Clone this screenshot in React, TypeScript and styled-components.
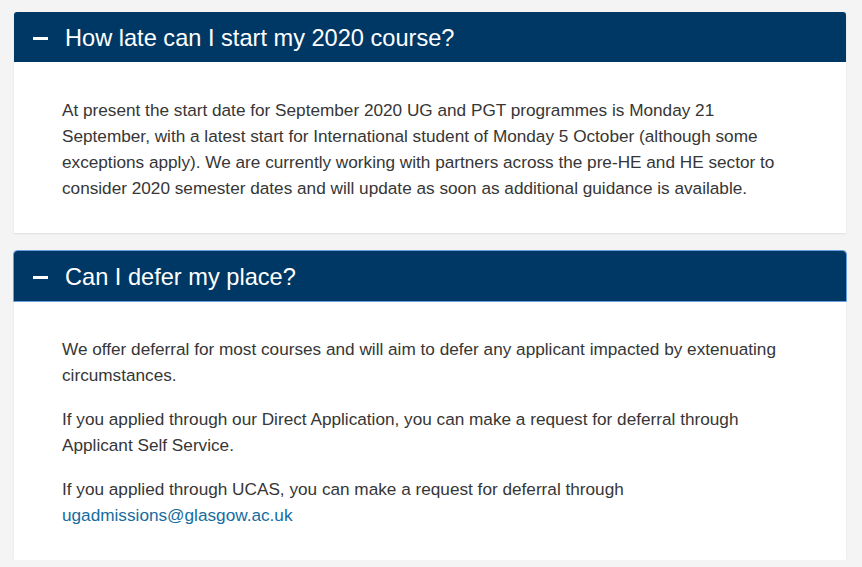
import { useState } from "react";
import styled, { createGlobalStyle } from "styled-components";

const GlobalStyle = createGlobalStyle`
	html, body {
		margin: 0;
		padding: 0;
		background: #f4f4f4;
	}
	body {
		font-family: "Liberation Sans", Arial, sans-serif;
	}
	* {
		box-sizing: border-box;
	}
`;

const Page = styled.div`
	padding: 12px 16px 0 14px;
	display: flex;
	flex-direction: column;
	gap: 18px;
`;

const Panel = styled.section`
	display: flex;
	flex-direction: column;
	background: #ffffff;
	border-radius: 3px 3px 0 0;
	box-shadow: 0 1px 2px rgba(0, 0, 0, 0.09);
`;

const Header = styled.button<{ focused?: boolean }>`
	display: flex;
	align-items: center;
	gap: 17px;
	height: 50px;
	padding: 2px 0 0 19px;
	border: none;
	border-radius: 3px 3px 0 0;
	background: #003865;
	color: #ffffff;
	font: 400 23.6px "Liberation Sans", Arial, sans-serif;
	text-align: left;
	cursor: pointer;
	outline: ${({ focused }) => (focused ? "1px solid #6a9fe0" : "none")};
`;

const Minus = styled.span`
	display: block;
	width: 15px;
	height: 3px;
	background: #ffffff;
	flex-shrink: 0;
`;

const Body = styled.div`
	padding: 35px 60px 32px 48px;
	display: flex;
	flex-direction: column;
	gap: 18px;
`;

const Text = styled.p`
	margin: 0;
	font-size: 17.2px;
	line-height: 26px;
	color: #363636;
`;

const Link = styled.a`
	color: #156c9e;
	text-decoration: none;
`;

interface Item {
	question: string;
	answer: React.ReactNode[];
}

const items: Item[] = [
	{
		question: "How late can I start my 2020 course?",
		answer: [
			"At present the start date for September 2020 UG and PGT programmes is Monday 21 September, with a latest start for International student of Monday 5 October (although some exceptions apply). We are currently working with partners across the pre-HE and HE sector to consider 2020 semester dates and will update as soon as additional guidance is available."
		]
	},
	{
		question: "Can I defer my place?",
		answer: [
			"We offer deferral for most courses and will aim to defer any applicant impacted by extenuating circumstances.",
			"If you applied through our Direct Application, you can make a request for deferral through Applicant Self Service.",
			<>
				If you applied through UCAS, you can make a request for deferral through{" "}
				<Link href="#">ugadmissions@glasgow.ac.uk</Link>
			</>
		]
	}
];

const App = () => {
	const [ open, setOpen ] = useState([ true, true ]);

	return (
		<>
			<GlobalStyle />
			<Page>
				{items.map((item, i) => (
					<Panel key={item.question}>
						<Header
							focused={i === 1}
							onClick={() => setOpen(p => p.map((v, j) => (j === i ? !v : v)))}
							type="button"
						>
							<Minus />
							{item.question}
						</Header>
						{open[i] && (
							<Body>
								{item.answer.map((a, k) => (
									<Text key={k}>{a}</Text>
								))}
							</Body>
						)}
					</Panel>
				))}
			</Page>
		</>
	);
};

export default App;
